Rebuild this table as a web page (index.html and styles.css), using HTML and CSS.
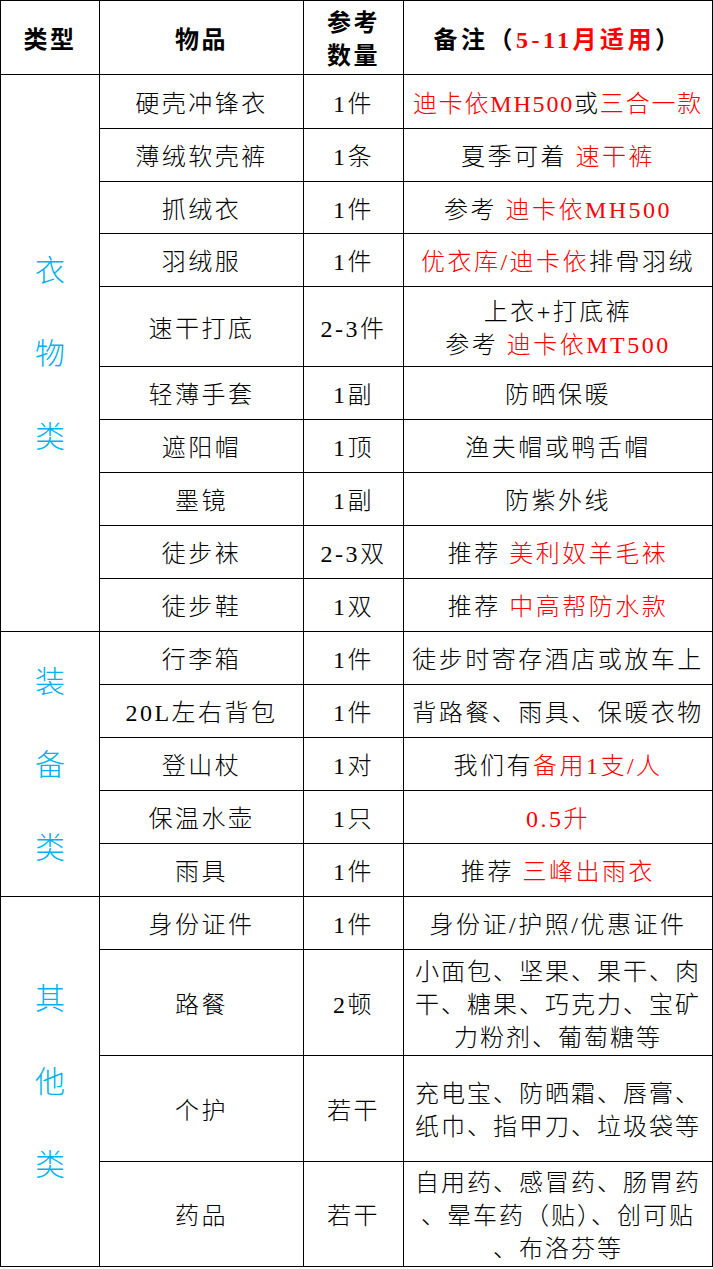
FILE: index.html
```html
<!DOCTYPE html>
<html lang="zh-CN">
<head>
<meta charset="utf-8">
<title>徒步装备清单</title>
<link rel="stylesheet" href="styles.css">
</head>
<body>
<table class="list">
  <colgroup>
    <col class="c1"><col class="c2"><col class="c3"><col class="c4">
  </colgroup>
  <thead>
    <tr class="h-head">
      <th>类型</th>
      <th>物品</th>
      <th>参考<br>数量</th>
      <th class="wide">备注（<span class="red">5-11月适用</span>）</th>
    </tr>
  </thead>
  <tbody>
    <tr class="h54">
      <td class="cat" rowspan="10"><span>衣</span><span>物</span><span>类</span></td>
      <td>硬壳冲锋衣</td><td>1件</td><td class="tight"><span class="red">迪卡依MH500</span>或<span class="red">三合一款</span></td>
    </tr>
    <tr class="h53"><td>薄绒软壳裤</td><td>1条</td><td>夏季可着 <span class="red">速干裤</span></td></tr>
    <tr class="h52"><td>抓绒衣</td><td>1件</td><td>参考 <span class="red">迪卡依MH500</span></td></tr>
    <tr class="h53"><td>羽绒服</td><td>1件</td><td><span class="red">优衣库/迪卡依</span>排骨羽绒</td></tr>
    <tr class="h80"><td>速干打底</td><td>2-3件</td><td>上衣+打底裤<br>参考 <span class="red">迪卡依MT500</span></td></tr>
    <tr class="h53"><td>轻薄手套</td><td>1副</td><td>防晒保暖</td></tr>
    <tr class="h53"><td>遮阳帽</td><td>1顶</td><td>渔夫帽或鸭舌帽</td></tr>
    <tr class="h53"><td>墨镜</td><td>1副</td><td>防紫外线</td></tr>
    <tr class="h53"><td>徒步袜</td><td>2-3双</td><td>推荐 <span class="red">美利奴羊毛袜</span></td></tr>
    <tr class="h53"><td>徒步鞋</td><td>1双</td><td>推荐 <span class="red">中高帮防水款</span></td></tr>

    <tr class="h53">
      <td class="cat" rowspan="5"><span>装</span><span>备</span><span>类</span></td>
      <td>行李箱</td><td>1件</td><td>徒步时寄存酒店或放车上</td>
    </tr>
    <tr class="h53"><td>20L左右背包</td><td>1件</td><td>背路餐、雨具、保暖衣物</td></tr>
    <tr class="h53"><td>登山杖</td><td>1对</td><td>我们有<span class="red">备用1支/人</span></td></tr>
    <tr class="h53"><td>保温水壶</td><td>1只</td><td><span class="red">0.5升</span></td></tr>
    <tr class="h53"><td>雨具</td><td>1件</td><td>推荐 <span class="red">三峰出雨衣</span></td></tr>

    <tr class="h53">
      <td class="cat" rowspan="4"><span>其</span><span>他</span><span>类</span></td>
      <td>身份证件</td><td>1件</td><td>身份证/护照/优惠证件</td>
    </tr>
    <tr class="h106"><td>路餐</td><td>2顿</td><td class="multi">小面包、坚果、果干、肉<br>干、糖果、巧克力、宝矿<br>力粉剂、葡萄糖等</td></tr>
    <tr class="h106"><td>个护</td><td>若干</td><td class="multi">充电宝、防晒霜、唇膏、<br>纸巾、指甲刀、垃圾袋等</td></tr>
    <tr class="h105"><td>药品</td><td>若干</td><td class="multi">自用药、感冒药、肠胃药<br>、晕车药（贴）、创可贴<br>、布洛芬等</td></tr>
  </tbody>
</table>
</body>
</html>
```

FILE: styles.css
```css
html, body {
  margin: 0;
  padding: 0;
  background: #ffffff;
}

body {
  font-family: "Liberation Serif", "Noto Sans CJK SC", serif;
  color: #000000;
}

.list {
  border-collapse: collapse;
  table-layout: fixed;
  width: 712px;
}

.c1 { width: 99px; }
.c2 { width: 204px; }
.c3 { width: 100px; }
.c4 { width: 309px; }

.list th,
.list td {
  border: 1px solid #000000;
  padding: 5px 0 0 0;
  text-align: center;
  vertical-align: middle;
  font-size: 24px;
  line-height: 33px;
  letter-spacing: 2.5px;
  font-weight: 300;
  white-space: nowrap;
}

.list th {
  font-weight: 700;
}

.list th.wide {
  letter-spacing: 3.5px;
}

.list td.tight {
  letter-spacing: 1.8px;
}

.red {
  color: #ff0000;
}

.h-head { height: 74px; }
.h54 { height: 54px; }
.h53 { height: 53px; }
.h52 { height: 52px; }
.h80 { height: 80px; }
.h106 { height: 106px; }
.h105 { height: 105px; }

.list td.cat {
  color: #00b0f0;
  font-size: 30px;
  line-height: 83px;
  letter-spacing: 0;
  padding-top: 0;
}

.cat span {
  display: block;
}

.list td.multi {
  letter-spacing: 2px;
}
```
